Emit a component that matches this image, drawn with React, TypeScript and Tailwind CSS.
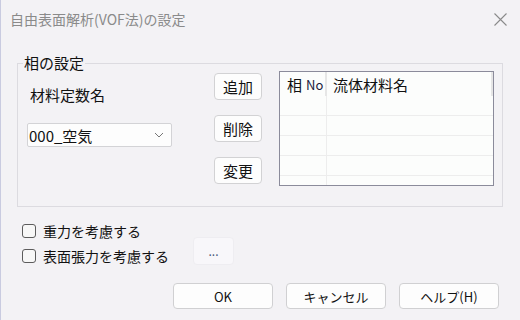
import React from 'react'

const font = { fontFamily: '"Noto Sans CJK JP", "Noto Sans", sans-serif' }

const rows = [0, 1, 2, 3, 4]

function SideButton({ label }: { label: string }) {
  return (
    <button className="h-[27px] w-[48px] rounded-[4px] border border-[#d2d2d4] bg-[#fdfdfd] text-[15px] leading-none text-[#111]">
      {label}
    </button>
  )
}

function Check({ label }: { label: string }) {
  return (
    <label className="flex h-[24px] items-center gap-[7px]">
      <span className="h-[14px] w-[14px] rounded-[3px] border border-[#5c5c5c] bg-[#f7f7f7]" />
      <span className="text-[14px] leading-none text-[#111]">{label}</span>
    </label>
  )
}

function DialogButton({ label }: { label: string }) {
  return (
    <button className="h-[26px] w-[100px] rounded-[4px] border border-[#d0d0d2] bg-[#fdfdfd] text-[13px] leading-none text-[#111]">
      {label}
    </button>
  )
}

export default function App() {
  return (
    <div style={font} className="flex h-[320px] w-[520px] flex-col border-l border-[#c9cbe0] bg-[#f3f2f5]">
      {/* title bar */}
      <div className="flex h-[38px] items-center justify-between pl-[9px] pr-[13px]">
        <span className="text-[14px] leading-none text-[#8a8a8a]">自由表面解析(VOF法)の設定</span>
        <svg width="13" height="13" viewBox="0 0 13 13">
          <path d="M0.5 0.5 L12.5 12.5 M12.5 0.5 L0.5 12.5" stroke="#8a8a8a" strokeWidth="1.1" />
        </svg>
      </div>

      {/* phase group */}
      <fieldset className="ml-[16px] mt-[17px] h-[152px] w-[486px] border border-[#dcdbe0]">
        <legend className="ml-[5px] px-[1px] text-[15px] leading-[16px] text-[#111]">相の設定</legend>
        <div className="flex items-start pl-[9px] pr-[8px]">
          <div className="flex w-[145px] flex-col">
            <span className="ml-[3px] mt-[14px] h-[20px] text-[15px] leading-[20px] text-[#111]">材料定数名</span>
            <div className="mt-[18px] flex h-[24px] items-center justify-between rounded-[2px] border border-[#d3d3d6] bg-[#fdfdfd] pl-[1px] pr-[7px]">
              <span className="text-[15px] leading-none text-[#111]">000_空気</span>
              <svg width="10" height="6" viewBox="0 0 10 6">
                <path d="M1 1 L5 5 L9 1" fill="none" stroke="#777" strokeWidth="1" />
              </svg>
            </div>
          </div>

          <div className="ml-[42px] mt-[2px] flex flex-col gap-[15px]">
            <SideButton label="追加" />
            <SideButton label="削除" />
            <SideButton label="変更" />
          </div>

          <div className="ml-[17px] flex h-[115px] w-[215px] flex-col overflow-hidden border border-[#8b8b9b] bg-[#fcfdfc]">
            <div className="flex h-[24px] shrink-0 items-center">
              <div className="flex h-full w-[47px] items-center border-r-2 border-[#e6e6e6] pl-[7px]">
                <span className="text-[15px] leading-none text-[#111]">相</span>
                <span className="ml-[4px] text-[13px] leading-none text-[#1a1a3c]">No</span>
              </div>
              <div className="flex h-full flex-1 items-center border-r-2 border-[#e6e6e6] pl-[6px]">
                <span className="text-[15px] leading-none text-[#111]">流体材料名</span>
              </div>
            </div>
            {rows.map((r) => (
              <div key={r} className="flex h-[20px] shrink-0 border-b border-[#ededed]">
                <div className="w-[47px] border-r border-[#ededed]" />
                <div className="flex-1" />
              </div>
            ))}
          </div>
        </div>
      </fieldset>

      {/* options */}
      <div className="mt-[12px] flex pl-[21px]">
        <div className="flex w-[171px] flex-col gap-[1px]">
          <Check label="重力を考慮する" />
          <Check label="表面張力を考慮する" />
        </div>
        <button className="mt-[18px] h-[28px] w-[41px] rounded-[4px] border border-[#eeedf1] bg-[#f8f7fa] text-[12px] leading-none text-[#4a5a7a]">
          ...
        </button>
      </div>

      {/* dialog buttons */}
      <div className="mt-[15px] flex justify-end gap-[13px] pr-[21px]">
        <DialogButton label="OK" />
        <DialogButton label="キャンセル" />
        <DialogButton label="ヘルプ(H)" />
      </div>
    </div>
  )
}
